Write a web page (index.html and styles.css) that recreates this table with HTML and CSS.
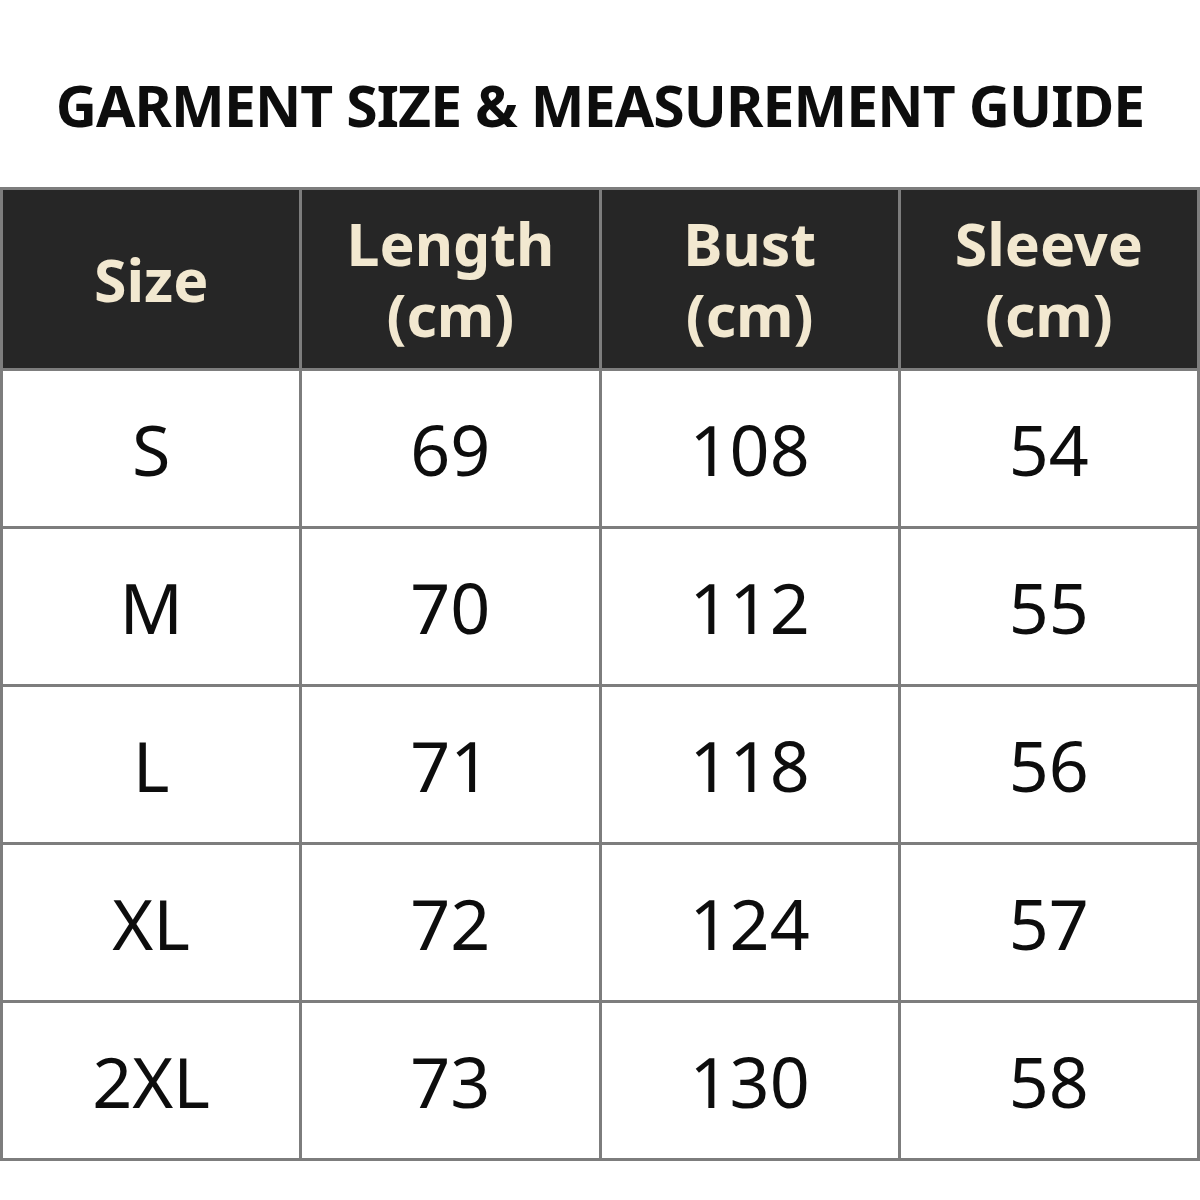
FILE: index.html
```html
<!DOCTYPE html>
<html lang="en">
<head>
<meta charset="utf-8">
<title>Garment Size &amp; Measurement Guide</title>
<link rel="stylesheet" href="styles.css">
</head>
<body>
<div class="page">
  <h1 class="title">GARMENT SIZE &amp; MEASUREMENT GUIDE</h1>
  <div class="table">
    <div class="cell head"><span class="line">Size</span></div>
    <div class="cell head"><span class="line">Length</span><span class="line">(cm)</span></div>
    <div class="cell head"><span class="line">Bust</span><span class="line">(cm)</span></div>
    <div class="cell head"><span class="line">Sleeve</span><span class="line">(cm)</span></div>

    <div class="cell">S</div><div class="cell">69</div><div class="cell">108</div><div class="cell">54</div>
    <div class="cell">M</div><div class="cell">70</div><div class="cell">112</div><div class="cell">55</div>
    <div class="cell">L</div><div class="cell">71</div><div class="cell">118</div><div class="cell">56</div>
    <div class="cell">XL</div><div class="cell">72</div><div class="cell">124</div><div class="cell">57</div>
    <div class="cell">2XL</div><div class="cell">73</div><div class="cell">130</div><div class="cell">58</div>
  </div>
</div>
</body>
</html>
```

FILE: styles.css
```css
html, body {
  margin: 0;
  padding: 0;
  background: #ffffff;
}
.page {
  width: 1200px;
  font-family: "Noto Sans", "Open Sans", sans-serif;
}
.title {
  margin: 0;
  height: 187px;
  display: flex;
  align-items: center;
  justify-content: center;
  font-size: 57px;
  font-weight: 700;
  color: #0d0d0d;
  letter-spacing: -0.9px;
  padding-top: 22px;
  box-sizing: border-box;
}
.table {
  display: grid;
  grid-template-columns: repeat(4, 1fr);
  grid-template-rows: 178px repeat(5, 155px);
  gap: 3px;
  padding: 3px;
  background: #7d7d7d;
}
.cell {
  background: #ffffff;
  display: flex;
  flex-direction: column;
  align-items: center;
  justify-content: center;
  text-align: center;
  font-size: 70px;
  font-weight: 400;
  color: #0d0d0d;
}
.head {
  background: #262626;
  color: #f2e8d0;
  font-size: 59px;
  font-weight: 700;
}
.line {
  display: block;
  line-height: 71px;
}
```
